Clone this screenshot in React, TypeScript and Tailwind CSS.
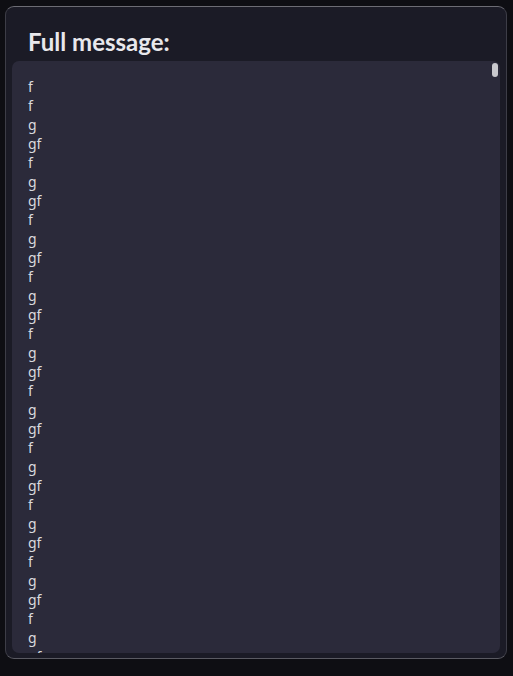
const pattern = ["f", "g", "gf"]

const lines = ["f", ...Array.from({ length: 31 }, (_, i) => pattern[i % 3])]

export default function App() {
    return (
        <div className="min-h-screen bg-[#0e0e13] pt-[6px] pl-[5px]">
            <div
                className="w-[502px] h-[653px] flex flex-col rounded-[9px] border border-[#3d3d47] border-t-[#6c6c74] border-b-[#5a5a62] bg-[#1b1b26] px-[6px] pb-[5px]"
                style={{ fontFamily: "Lato, 'Noto Sans', sans-serif" }}
            >
                <h2 className="px-[16px] pt-[20px] pb-[4px] text-[24px] leading-[30px] font-bold text-[#e8e8ec]">
                    Full message:
                </h2>
                <div className="relative flex-1 min-h-0 rounded-[7px] bg-[#2b2a3a] overflow-hidden">
                    <div
                        className="h-full overflow-hidden pl-[16px] pt-[16px] text-[14px] leading-[19px] text-[#d9d9de] whitespace-pre-wrap"
                        style={{ fontFamily: "'Noto Sans', sans-serif" }}
                    >
                        {lines.join("\n")}
                    </div>
                    {/* scrollbar thumb */}
                    <div className="absolute right-[2px] top-[2px] w-[6px] h-[14px] rounded-full bg-[#c9c9ce]" />
                </div>
            </div>
        </div>
    )
}
